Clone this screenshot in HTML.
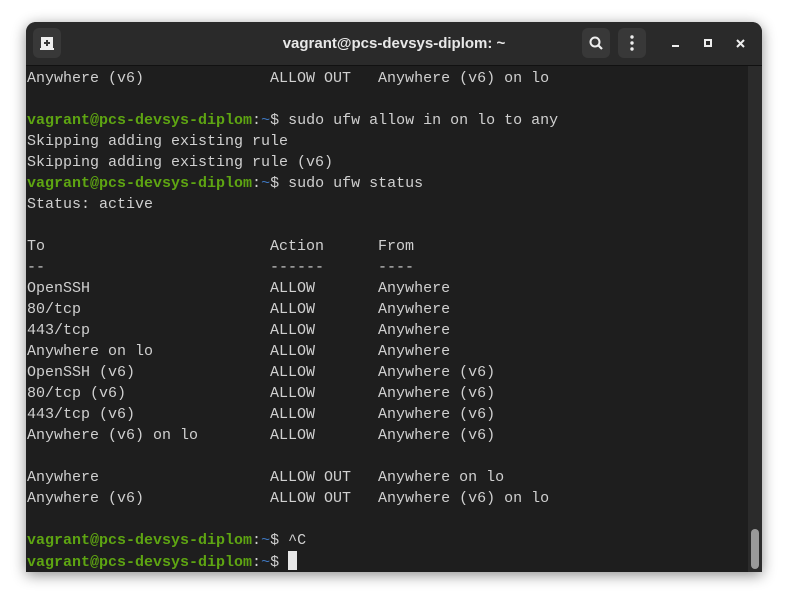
<!DOCTYPE html><html><head><style>
body{margin:0;width:788px;height:601px;background:#fff;overflow:hidden;font-family:"Liberation Sans",sans-serif}
.win{position:absolute;left:26px;top:22px;width:736px;height:550px;background:#1e1e1e;border-radius:10px 10px 0 0;box-shadow:0 3px 14px rgba(0,0,0,.45);overflow:hidden}
.tb{position:absolute;left:0;top:0;width:736px;height:43px;background:#2a2a2a;border-bottom:1px solid #111}
.title{position:absolute;left:0;right:0;top:13px;text-align:center;color:#e8e8e8;font-weight:bold;font-size:15px}
.btn{position:absolute;top:6px;width:28px;height:30px;background:#383838;border-radius:6px}
.term{position:absolute;left:1px;top:46px;font-family:"Liberation Mono",monospace;font-size:15px;line-height:21px;color:#d0d0d0;white-space:pre}
.g{color:#5ea512;font-weight:bold}.b{color:#3f78c0}
.sb{position:absolute;right:0;top:44px;width:14px;height:506px;background:#2b2b2b}
.th{position:absolute;left:3px;top:463px;width:8px;height:40px;background:#9a9a9a;border-radius:4px}
.cur{display:inline-block;width:9px;height:19px;background:#e8e8e8;vertical-align:-4px}
</style></head><body><div class="win">
<div class="tb">
<div class="btn" style="left:7px"><svg width="28" height="30"><path d="M8 9h12v11h-12z" fill="#eee"/><path d="M13 12h2v6h-2zM11 14h6v2h-6z" fill="#383838"/><path d="M7 20h14v2h-14z" fill="#eee"/></svg></div>
<div class="title">vagrant@pcs-devsys-diplom: ~</div>
<div class="btn" style="left:556px"><svg width="28" height="30"><circle cx="13" cy="14" r="4.5" fill="none" stroke="#eee" stroke-width="2"/><path d="M16 17l4 4" stroke="#eee" stroke-width="2.2"/></svg></div>
<div class="btn" style="left:592px"><svg width="28" height="30"><circle cx="14" cy="9" r="1.7" fill="#eee"/><circle cx="14" cy="15" r="1.7" fill="#eee"/><circle cx="14" cy="21" r="1.7" fill="#eee"/></svg></div>
<svg style="position:absolute;left:640px;top:10px" width="90" height="24"><path d="M6 14h7" stroke="#eee" stroke-width="2"/><rect x="39" y="8" width="6" height="6" fill="none" stroke="#eee" stroke-width="2"/><path d="M71 8l7 7M78 8l-7 7" stroke="#eee" stroke-width="2"/></svg>
</div>
<div class="term">Anywhere (v6)              ALLOW OUT   Anywhere (v6) on lo

<span class="g">vagrant@pcs-devsys-diplom</span>:<span class="b">~</span>$ sudo ufw allow in on lo to any
Skipping adding existing rule
Skipping adding existing rule (v6)
<span class="g">vagrant@pcs-devsys-diplom</span>:<span class="b">~</span>$ sudo ufw status
Status: active

To                         Action      From
--                         ------      ----
OpenSSH                    ALLOW       Anywhere
80/tcp                     ALLOW       Anywhere
443/tcp                    ALLOW       Anywhere
Anywhere on lo             ALLOW       Anywhere
OpenSSH (v6)               ALLOW       Anywhere (v6)
80/tcp (v6)                ALLOW       Anywhere (v6)
443/tcp (v6)               ALLOW       Anywhere (v6)
Anywhere (v6) on lo        ALLOW       Anywhere (v6)

Anywhere                   ALLOW OUT   Anywhere on lo
Anywhere (v6)              ALLOW OUT   Anywhere (v6) on lo

<span class="g">vagrant@pcs-devsys-diplom</span>:<span class="b">~</span>$ ^C
<span class="g">vagrant@pcs-devsys-diplom</span>:<span class="b">~</span>$ <span class="cur"></span></div>
<div class="sb"><div class="th"></div></div>
</div></body></html>
